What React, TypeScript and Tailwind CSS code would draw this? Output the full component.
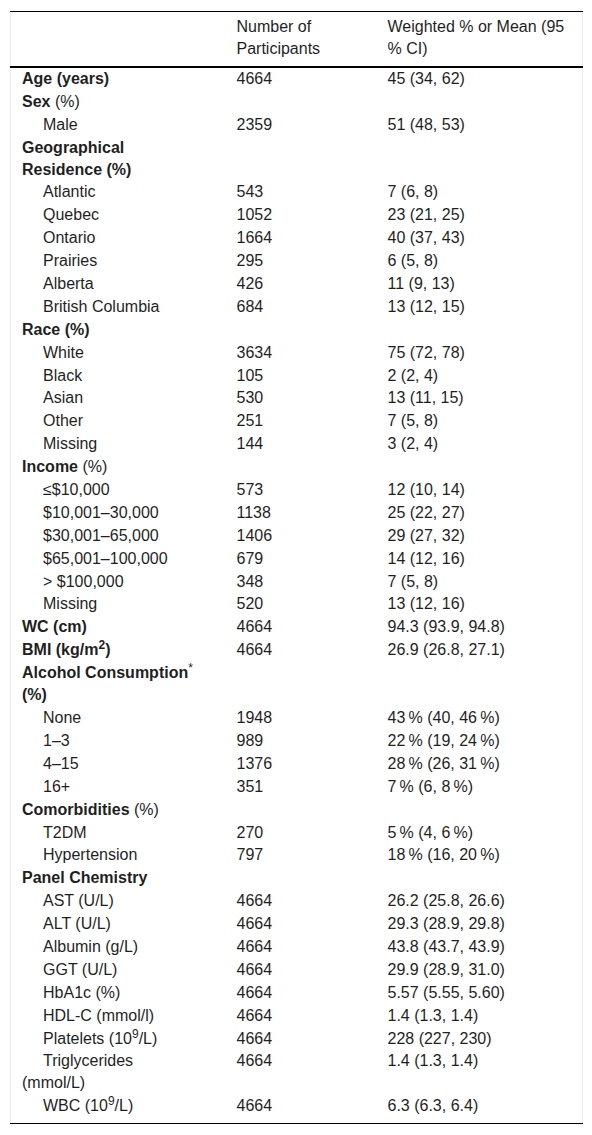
import React from "react";

type Row = {
    label: React.ReactNode;
    n?: string;
    value?: string;
    sub?: boolean;
};

// thin space used before % in the percentage columns
const ts = "\u2009";

const rows: Row[] = [
    { label: <b>Age (years)</b>, n: "4664", value: "45 (34, 62)" },
    { label: <><b>Sex</b> (%)</> },
    { label: "Male", n: "2359", value: "51 (48, 53)", sub: true },
    { label: <b>Geographical Residence (%)</b> },
    { label: "Atlantic", n: "543", value: "7 (6, 8)", sub: true },
    { label: "Quebec", n: "1052", value: "23 (21, 25)", sub: true },
    { label: "Ontario", n: "1664", value: "40 (37, 43)", sub: true },
    { label: "Prairies", n: "295", value: "6 (5, 8)", sub: true },
    { label: "Alberta", n: "426", value: "11 (9, 13)", sub: true },
    { label: "British Columbia", n: "684", value: "13 (12, 15)", sub: true },
    { label: <b>Race (%)</b> },
    { label: "White", n: "3634", value: "75 (72, 78)", sub: true },
    { label: "Black", n: "105", value: "2 (2, 4)", sub: true },
    { label: "Asian", n: "530", value: "13 (11, 15)", sub: true },
    { label: "Other", n: "251", value: "7 (5, 8)", sub: true },
    { label: "Missing", n: "144", value: "3 (2, 4)", sub: true },
    { label: <><b>Income</b> (%)</> },
    { label: "≤$10,000", n: "573", value: "12 (10, 14)", sub: true },
    { label: "$10,001–30,000", n: "1138", value: "25 (22, 27)", sub: true },
    { label: "$30,001–65,000", n: "1406", value: "29 (27, 32)", sub: true },
    { label: "$65,001–100,000", n: "679", value: "14 (12, 16)", sub: true },
    { label: "> $100,000", n: "348", value: "7 (5, 8)", sub: true },
    { label: "Missing", n: "520", value: "13 (12, 16)", sub: true },
    { label: <b>WC (cm)</b>, n: "4664", value: "94.3 (93.9, 94.8)" },
    { label: <b>BMI (kg/m<sup>2</sup>)</b>, n: "4664", value: "26.9 (26.8, 27.1)" },
    { label: <b>Alcohol Consumption<sup className="font-normal">*</sup> (%)</b> },
    { label: "None", n: "1948", value: `43${ts}% (40, 46${ts}%)`, sub: true },
    { label: "1–3", n: "989", value: `22${ts}% (19, 24${ts}%)`, sub: true },
    { label: "4–15", n: "1376", value: `28${ts}% (26, 31${ts}%)`, sub: true },
    { label: "16+", n: "351", value: `7${ts}% (6, 8${ts}%)`, sub: true },
    { label: <><b>Comorbidities</b> (%)</> },
    { label: "T2DM", n: "270", value: `5${ts}% (4, 6${ts}%)`, sub: true },
    { label: "Hypertension", n: "797", value: `18${ts}% (16, 20${ts}%)`, sub: true },
    { label: <b>Panel Chemistry</b> },
    { label: "AST (U/L)", n: "4664", value: "26.2 (25.8, 26.6)", sub: true },
    { label: "ALT (U/L)", n: "4664", value: "29.3 (28.9, 29.8)", sub: true },
    { label: "Albumin (g/L)", n: "4664", value: "43.8 (43.7, 43.9)", sub: true },
    { label: "GGT (U/L)", n: "4664", value: "29.9 (28.9, 31.0)", sub: true },
    { label: "HbA1c (%)", n: "4664", value: "5.57 (5.55, 5.60)", sub: true },
    { label: "HDL-C (mmol/l)", n: "4664", value: "1.4 (1.3, 1.4)", sub: true },
    { label: <>Platelets (10<sup>9</sup>/L)</>, n: "4664", value: "228 (227, 230)", sub: true },
    { label: "Triglycerides (mmol/L)", n: "4664", value: "1.4 (1.3, 1.4)", sub: true },
    { label: <>WBC (10<sup>9</sup>/L)</>, n: "4664", value: "6.3 (6.3, 6.4)", sub: true },
];

const App: React.FC = () => {
    return (
        <div className="bg-white pt-[11px] px-[10px] pb-[12px] text-[#1f1f1f] text-[16px] leading-[22px] font-['Liberation_Sans',Arial,sans-serif]">
            <table className="w-[572px] table-fixed border-collapse border-x border-x-[#ececec]">
                <colgroup>
                    <col className="w-[215px]" />
                    <col className="w-[151px]" />
                    <col className="w-[206px]" />
                </colgroup>
                <thead>
                    <tr className="border-t border-t-black border-b-2 border-b-black align-top text-left">
                        <th className="font-normal pt-[4px] pb-[5.5px] pl-[11px] pr-[31px]"></th>
                        <th className="font-normal pt-[4px] pb-[5.5px] pl-[11px] pr-[10px]">Number of Participants</th>
                        <th className="font-normal pt-[4px] pb-[5.5px] pl-[11px] pr-[11px]">Weighted % or Mean (95 % CI)</th>
                    </tr>
                </thead>
                <tbody className="border-b border-b-black">
                    {rows.map((r, i) => {
                        const last = i === rows.length - 1;
                        const pad = last ? "pt-[0.4px] pb-[5.5px]" : "pt-[0.4px] pb-[0.5px]";
                        return (
                            <tr key={i} className="align-top">
                                <td className={`${pad} pl-[11px] pr-[31px] ${r.sub ? "indent-[21px]" : ""}`}>{r.label}</td>
                                <td className={`${pad} pl-[11px] pr-[10px]`}>{r.n}</td>
                                <td className={`${pad} pl-[11px] pr-[11px]`}>{r.value}</td>
                            </tr>
                        );
                    })}
                </tbody>
            </table>
        </div>
    );
};

export default App;
